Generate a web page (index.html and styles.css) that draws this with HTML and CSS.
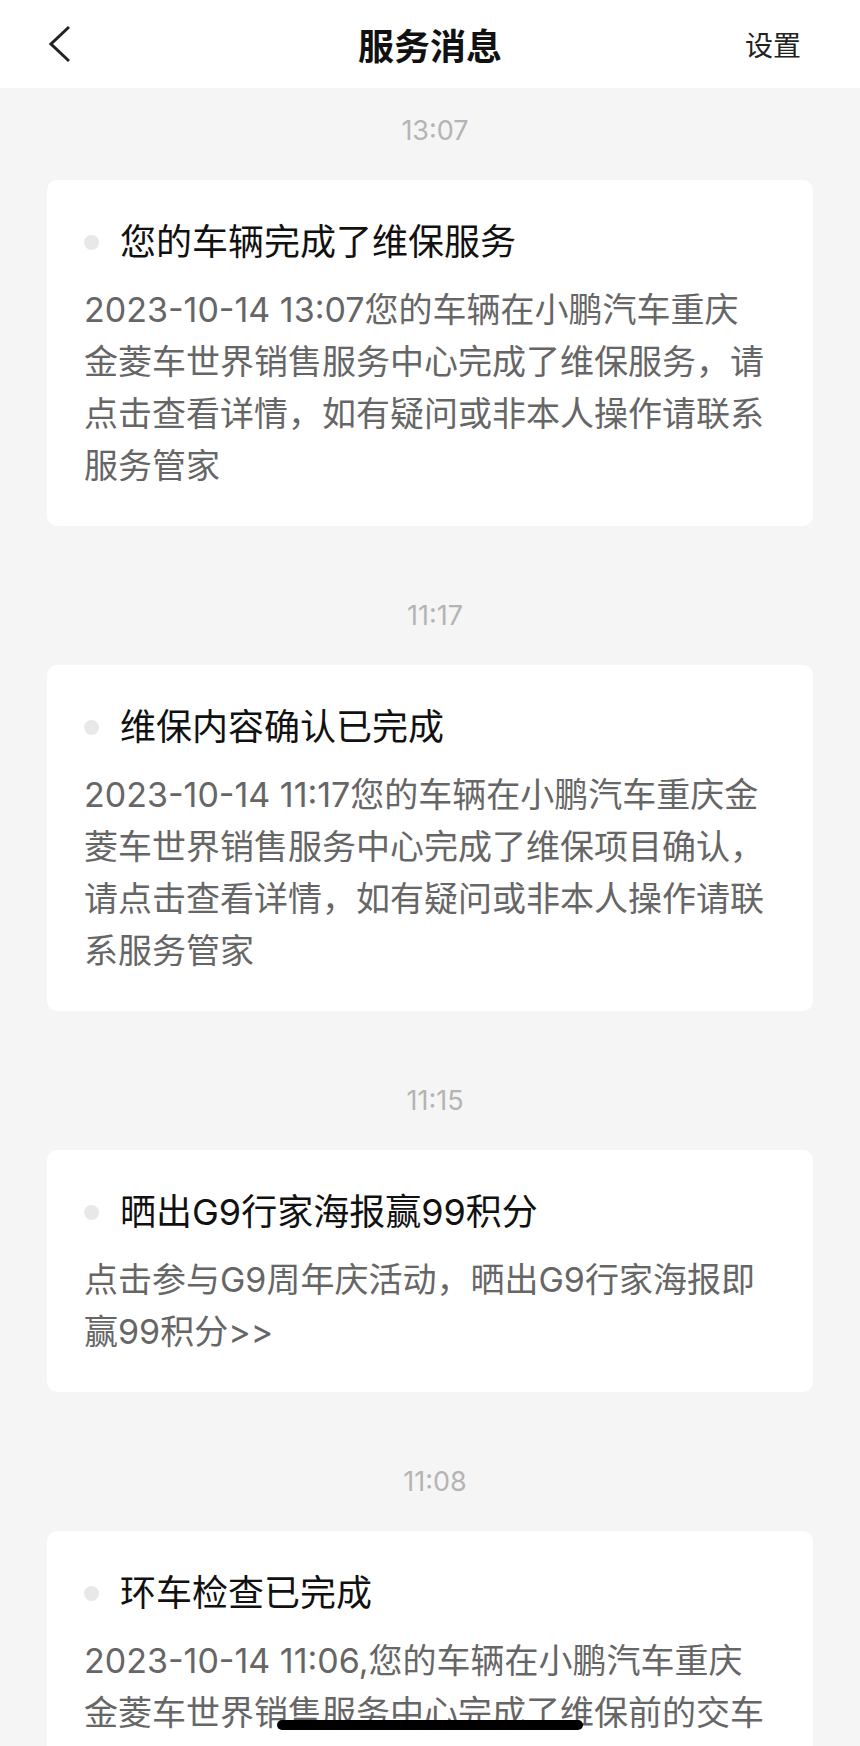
FILE: index.html
```html
<!DOCTYPE html>
<html lang="zh-CN">
<head>
  <meta charset="UTF-8">
  <title>服务消息</title>
  <link rel="stylesheet" href="styles.css">
</head>
<body>
  <div class="page">
    <div class="header">
      <span class="back">
        <svg width="22" height="38" viewBox="0 0 22 38">
          <polyline points="20,2 2,19 20,36" fill="none" stroke="#222" stroke-width="3"/>
        </svg>
      </span>
      <h1>服务消息</h1>
      <span class="settings">设置</span>
    </div>

    <div class="list">
      <div class="time first">13:07</div>
      <div class="card">
        <div class="card-title"><span class="dot"></span>您的车辆完成了维保服务</div>
        <div class="card-body">2023-10-14 13:07您的车辆在小鹏汽车重庆<br>金菱车世界销售服务中心完成了维保服务，请<br>点击查看详情，如有疑问或非本人操作请联系<br>服务管家</div>
      </div>

      <div class="time">11:17</div>
      <div class="card">
        <div class="card-title"><span class="dot"></span>维保内容确认已完成</div>
        <div class="card-body">2023-10-14 11:17您的车辆在小鹏汽车重庆金<br>菱车世界销售服务中心完成了维保项目确认，<br>请点击查看详情，如有疑问或非本人操作请联<br>系服务管家</div>
      </div>

      <div class="time">11:15</div>
      <div class="card">
        <div class="card-title"><span class="dot"></span>晒出G9行家海报赢99积分</div>
        <div class="card-body">点击参与G9周年庆活动，晒出G9行家海报即<br>赢99积分&gt;&gt;</div>
      </div>

      <div class="time">11:08</div>
      <div class="card">
        <div class="card-title"><span class="dot"></span>环车检查已完成</div>
        <div class="card-body">2023-10-14 11:06,您的车辆在小鹏汽车重庆<br>金菱车世界销售服务中心完成了维保前的交车<br>检查，请点击查看详情，如有疑问或非本人操<br>作请联系服务管家</div>
      </div>
    </div>

    <div class="home-bar"></div>
  </div>
</body>
</html>
```

FILE: styles.css
```css
body {
  margin: 0;
  font-family: Inter, "Noto Sans CJK SC", sans-serif;
  background-color: #f5f5f5;
}

.page {
  height: 100vh;
  overflow: hidden;
  background-color: #f5f5f5;
}

.header {
  height: 88px;
  background-color: #fff;
  display: flex;
  align-items: center;
  justify-content: space-between;
  padding: 0 59px 0 49px;
}

.back {
  display: flex;
  width: 130px;
}

.header h1 {
  margin: 0;
  font-size: 36px;
  font-weight: bold;
  color: #111;
}

.settings {
  width: 120px;
  text-align: right;
  font-size: 28px;
  color: #222;
}

.list {
  padding: 0 47px;
}

.time {
  margin-top: 70px;
  margin-bottom: 29px;
  padding-left: 10px;
  height: 40px;
  line-height: 40px;
  text-align: center;
  font-size: 27px;
  color: #b4b4b4;
}

.time.first {
  margin-top: 23px;
}

.card {
  background-color: #fff;
  border-radius: 10px;
  padding: 38px 24px 34px 37px;
}

.card-title {
  display: flex;
  align-items: center;
  font-size: 36px;
  line-height: 48px;
  color: #111;
}

.dot {
  width: 15px;
  height: 15px;
  border-radius: 50%;
  background-color: #e8e8e8;
  margin-right: 21px;
  flex-shrink: 0;
}

.card-body {
  margin-top: 18px;
  font-size: 34px;
  line-height: 52px;
  color: #666;
}

.home-bar {
  position: fixed;
  left: 277px;
  bottom: 16px;
  width: 306px;
  height: 10px;
  border-radius: 5px;
  background-color: #000;
}
```
